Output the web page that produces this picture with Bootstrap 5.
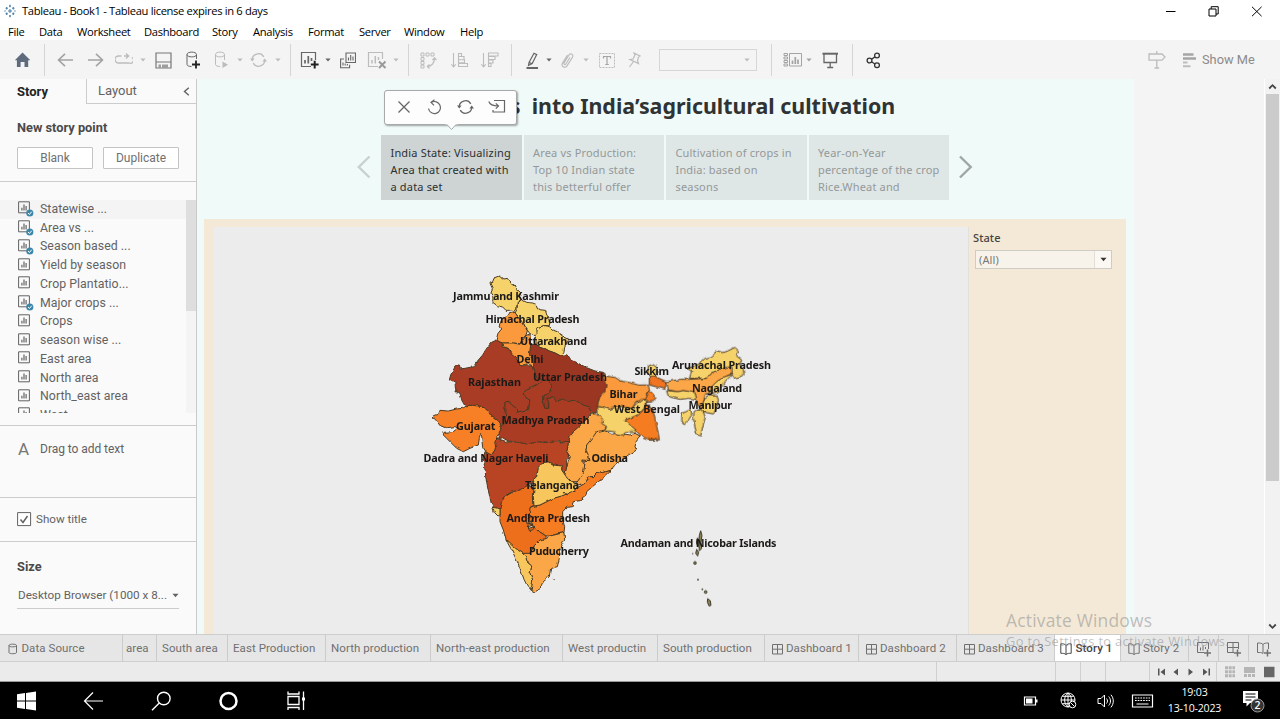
<!DOCTYPE html>
<html lang="en">
<head>
<meta charset="utf-8">
<meta name="viewport" content="width=device-width, initial-scale=1">
<title>Tableau - Book1</title>
<link href="https://cdn.jsdelivr.net/npm/bootstrap@5.3.0/dist/css/bootstrap.min.css" rel="stylesheet">
<style>
  body { font-family: Roboto, "Liberation Sans", sans-serif; font-size: 12.5px; color: #626262; line-height: 1.2; background: #fff; }
  svg { display: block; flex: none; fill: none; stroke: currentColor; }
  svg .solid { fill: currentColor; stroke: none; }
  .app-window { width: 1280px; height: 719px; }
  .os-font { font-family: "Open Sans", "Noto Sans", sans-serif; color: #000; }
  .title-strip { height: 22px; font-size: 11.2px; letter-spacing: -.34px; }
  .app-mark { color: #4c82ad; }
  .win-controls { gap: 32px; padding-right: 17px; }
  .menu-strip { height: 18px; font-size: 11.2px; padding: 1px 0 0 8px; display: grid; letter-spacing: -.3px;
    grid-template-columns: 31px 38px 67px 68px 41px 55px 51px 45px 56px 40px; }
  .tool-strip { height: 39px; background: #f4f4f4; display: grid; align-items: center; color: #666; padding: 1px 0 0 14px;
    grid-template-columns: 30px 13px 30px 28px 25px 15px 30px 29px 23px 13px 25px 15px 10px 25px 15px 27px 26px 15px 12px 31px 30px 30px 14px 21px 14px 23px 15px 30px 31px 112px 12px 23px 16px 30px 14px 282px 35px 90px; }
  .tool-strip .off { color: #bcbcbc; }
  .tool-strip .mid { color: #a3a3a3; }
  .rule { width: 1px; height: 32px; background: #d4d4d4; }
  .combo { width: 98px; height: 22px; border: 1px solid #d6d6d6; padding-right: 6px; }
  .show-me { font-size: 12.8px; color: #8b8b8b; gap: 6px; }
  .show-me svg { color: #a5a5a5; }
  .work-row { height: 555px; }
  .side-pane { width: 197px; background: #fafafa; border-right: 1px solid #c9c9c9; }
  .pane-tabs { height: 25px; font-size: 13px; }
  .pane-tabs .current { width: 86px; padding-left: 17px; color: #222; font-weight: 700; }
  .pane-tabs .other { border-left: 1px solid #ccc; border-bottom: 1px solid #ccc; padding: 0 6px 0 11px; }
  .pane-head { font-weight: 700; font-size: 12.8px; color: #4a4a4a; }
  .new-point { height: 77px; padding: 16px 17px 0; }
  .pane-btn { height: 22px; width: 76px; border: 1px solid #c4c4c4; background: #fff; color: #707070; font-size: 12px; padding: 0 0 1px; border-radius: 1px; line-height: 1; }
  .sheets { height: 245px; border-top: 1px solid #ccc; border-bottom: 1px solid #ccc; padding-top: 18px; }
  .sheets-view { height: 213px; }
  .sheet-item { height: 18.74px; padding-left: 17.5px; gap: 6.5px; font-size: 12.3px; letter-spacing: .05px; white-space: nowrap; }
  .sheet-item:first-child { background: #f4f4f4; }
  .pane-thumb { width: 10px; height: 111px; background: #dedede; }
  .pane-track { width: 10px; background: #f4f4f4; }
  .text-drag { height: 72px; border-bottom: 1px solid #ccc; padding: 15px 18px 0; gap: 11px; font-size: 12px; }
  .text-drag b { font-size: 17px; font-weight: 400; line-height: 1; color: #777; }
  .text-drag span { padding-top: 1px; letter-spacing: -.05px; }
  .show-title { height: 44px; border-bottom: 1px solid #ccc; padding-left: 17px; gap: 4px; font-size: 11.6px; }
  .size-box { padding: 17px 17px 0; }
  .size-pick { margin-top: 10px; height: 25px; border-bottom: 1px solid #ccc; font-size: 11.7px; padding: 0 0 2px 1px; white-space: nowrap; }
  .story-canvas { width: 937px; background: #effaf9; }
  .grey-margin { width: 130px; background: #f4f4f4; }
  .v-scroll { width: 16px; background: #f2f2f2; border-left: 1px solid #fff; color: #444; }
  .v-thumb { height: 387px; width: 13px; background: #cbcbcb; }
  .story-title { font-family: "Noto Sans", sans-serif; font-weight: 700; font-size: 21.4px; color: #2f3333; height: 56px; white-space: pre; padding: 0 2px 3px 0; }
  .story-nav { height: 65px; padding-right: 1px; }
  .nav-prev { color: #c9d0d0; }
  .nav-next { color: #a0a6a6; }
  .captions { gap: 2px; width: 568px; }
  .caption-box { font-family: "Noto Sans", sans-serif; font-size: 11px; line-height: 17px; letter-spacing: .17px; background: #dfe6e6; color: #939999; padding: 9px 0 0 9.5px; width: 140.5px; white-space: nowrap; }
  .caption-box.current { background: #ced4d4; color: #2c3030; }
  .tip { left: 187px; top: 11px; width: 133px; height: 35px; background: #fdfdfd; border: 1px solid #a9a9a9; border-radius: 3px; box-shadow: 1px 1px 2px rgba(0,0,0,.35); padding: 0 0 2px 3px; color: #666; display: grid; grid-template-columns: repeat(4, 31px); place-items: center; }
  .tip-arrow { left: 60px; top: 32px; }
  .dash { background: #f4e9d7; margin: 19px 8px 0 7px; padding: 8px 0 0 10px; height: 415px; }
  .map-zone { width: 755px; background: #ececec; border-right: 1px solid #e2e0dc; }
  .filter-zone { padding: 4px 0 0 4px; font-family: "Noto Sans", sans-serif; font-size: 11px; color: #444; letter-spacing: .1px; }
  .filter-pick { width: 137px; height: 19px; margin: 6px 0 0 2px; background: #f8f3ea; border: 1px solid #cfccc6; padding: 0 0 0 3px; color: #777; }
  .filter-pick .drop { width: 17px; height: 17px; background: #fbf8f3; border-left: 1px solid #e2dfd8; color: #333; }
  .map-text text { font: 700 10.8px "Noto Sans", "Open Sans", sans-serif; fill: #1c1a18; stroke: none; }
  .sheet-tabs { height: 28px; background: #e6e6e6; border-top: 1px solid #cdcdcd; border-bottom: 1px solid #cfcfcf; display: grid; font-size: 11.5px; letter-spacing: .07px; color: #707070;
    grid-template-columns: 123px 34px 71px 98px 105px 132px 95px 107px 94px 98px 98px 66px 68px 30px 30px 31px; }
  .sheet-tabs > div { border-right: 1px solid #cbcbcb; display: flex; align-items: center; white-space: nowrap; padding: 2px 0 0 5px; gap: 3.5px; }
  .sheet-tabs > .ico { padding-left: 6.5px; }
  .sheet-tabs > .current { background: #fff; color: #444; font-weight: 500; }
  .status-strip { height: 20px; background: #ebebeb; border-bottom: 1px solid #999; display: grid; color: #555;
    grid-template-columns: 937px 119px 25px 25px 44px 67px 63px; }
  .status-strip > div { border-right: 1px solid #cfcfcf; }
  .status-strip > div:last-child { border: 0; }
  .task-strip { height: 37px; background: #000; color: #fff; display: grid; align-items: center; padding-left: 16px;
    grid-template-columns: 67px 68px 67px 67px 738px 37px 37px 34px 34.5px 75px 26px; }
  .task-strip svg { color: #fff; }
  .clock { width: 58px; font-size: 10.6px; line-height: 16.5px; color: #fff; letter-spacing: -.2px; padding-bottom: 1px; }
  .watermark { left: 1006px; top: 609px; color: rgba(135,135,135,.52); font-family: "Open Sans", sans-serif; pointer-events: none; white-space: nowrap; }
  .watermark .big { font-size: 17.4px; line-height: 22px; letter-spacing: .22px; }
  .watermark .sub { font-size: 12.8px; line-height: 20px; letter-spacing: .38px; }
</style>
</head>
<body class="overflow-hidden">

<svg width="0" height="0" class="position-absolute">
  <defs>
    <symbol id="caret" viewBox="0 0 6 4"><path class="solid" d="M.4.4h5.2L3 3.4z" fill="currentColor"/></symbol>
    <symbol id="sheet" viewBox="0 0 16 16"><path d="M.6.8h10.8v11H.6z"/><path d="M3.9 9.500V6.800M6 9.500V3.500M8.100 9.500V5" stroke-width="1.200"/></symbol>
    <symbol id="used" viewBox="0 0 16 16"><path d="M.6.8h10.8v11H.6z"/><path d="M3.9 9.500V6.800M6 9.500V3.500M8.100 9.500V5" stroke-width="1.200"/><circle cx="11.800" cy="12" r="3.600" fill="#3d87a8" stroke="none"/><path d="M10 12l1.400 1.500 2.300-2.800" stroke="#fff"/></symbol>
    <symbol id="dashb" viewBox="0 0 11 11"><path d="M.5.5h10v9.500H.5zM5.500.5V10M.5 5.200h10"/></symbol>
    <symbol id="book" viewBox="0 0 12 12"><path d="M6 2.500C4.500 .8 3 .7.8.8v9.500c2.200 0 3.700 0 5.200 1.200 1.500-1.200 3-1.200 5.200-1.200V.8C9 .7 7.500 .8 6 2.500v9"/></symbol>
  </defs>
</svg>

<div class="app-window d-flex flex-column position-relative">

  <header class="title-strip os-font d-flex align-items-center justify-content-between">
    <div class="d-flex align-items-center ps-1" style="gap:6px">
      <svg class="app-mark" width="12" height="14" viewBox="0 0 12 14" stroke-width="1.100"><path d="M6 5v4M4 7h4M6 .8v2.400M5 2h2M6 11v2.200M5 12h2M2.700 3v2.400M1.500 4.200h2.400M9.300 3v2.400M8.100 4.200h2.400M2.700 8.600V11M1.500 9.800h2.400M9.300 8.600V11M8.100 9.800h2.400M.3 7h1.500M10.200 7h1.500"/></svg>
      <span>Tableau - Book1 - Tableau license expires in 6 days</span>
    </div>
    <div class="win-controls d-flex align-items-center">
      <svg width="11" height="11"><path d="M1 5.500h9.500"/></svg>
      <svg width="11" height="11" viewBox="0 0 11 11"><path d="M1 3h7v7H1zM3.200 3V.7h7V8H8"/></svg>
      <svg width="12" height="11" viewBox="0 0 12 11"><path d="M1 .8l9.600 9.400M10.600.8L1 10.200"/></svg>
    </div>
  </header>

  <nav class="menu-strip os-font align-items-center">
    <span>File</span><span>Data</span><span>Worksheet</span><span>Dashboard</span><span>Story</span><span>Analysis</span><span>Format</span><span>Server</span><span>Window</span><span>Help</span>
  </nav>

  <div class="tool-strip">
    <svg width="17" height="16" viewBox="0 0 17 16" style="color:#5d6b7c"><path class="solid" d="M8.500 .6L16.300 8.300H14.200V15H10.500V10H6.600v5H2.900V8.300H.8z"/></svg>
    <div class="rule"></div>
    <svg class="mid" width="17" height="16" stroke-width="1.600"><path d="M1.500 8H16M8 1.800L1.500 8 8 14.200"/></svg>
    <svg class="mid" width="17" height="16" stroke-width="1.600"><path d="M15.500 8H1M9 1.800L15.500 8 9 14.200"/></svg>
    <svg class="off" width="18" height="16" stroke-width="1.300"><path d="M6.500 4H3.500a2.500 2.500 0 0 0 0 7h10.500a3 3 0 0 0 2.800-5.500M9 4h4.500M11 1.500L13.700 4 11 6.500"/></svg>
    <svg class="off" width="6" height="4"><use href="#caret"/></svg>
    <svg width="17" height="17" viewBox="0 0 17 17" style="color:#777"><path d="M1 1h15v15H1zM1 10h15" stroke-width="1.200"/><path class="solid" d="M3.500 12.500h2.500v3h-2.500zM7 12.500h6v3H7z" opacity=".7"/></svg>
    <svg width="16" height="18" viewBox="0 0 16 18"><path d="M11.500 8V3.500C11.500 .3 2 .3 2 3.500v10c0 1.200 2 2 4.500 2M2 3.500C2 6.700 11.500 6.700 11.500 3.500"/><path d="M11 9.500v8M7 13.500h8" stroke-width="1.800" stroke="#222"/></svg>
    <svg class="off" width="15" height="18" viewBox="0 0 15 18"><path d="M10.500 9V3.500C10.500 .3 1.500 .3 1.500 3.500v10c0 1.200 2 2 4.500 2M1.500 3.500C1.500 6.700 10.500 6.700 10.500 3.500"/><path class="solid" d="M8.500 10.500l5.500 3.200-5.500 3.200z"/></svg>
    <svg class="off" width="6" height="4"><use href="#caret"/></svg>
    <svg class="off" width="17" height="16" viewBox="0 0 17 16" stroke-width="1.300"><path d="M2.300 8.500A6.200 6.200 0 0 1 13.800 4.800M14.700 7.500A6.200 6.200 0 0 1 3.200 11.200"/><path class="solid" d="M0 6.500h4.600L2.300 9.600zM12.400 9.500H17l-2.300-3.100z"/></svg>
    <svg class="off" width="6" height="4"><use href="#caret"/></svg>
    <div class="rule"></div>
    <svg width="20" height="18" viewBox="0 0 20 18"><path d="M11 15.500H1.500V1.500h14V9" stroke-width="1.200"/><path d="M5 12.500V9M8.300 12.500V5M11.500 10V7" stroke-width="1.700"/><path d="M14.700 9.700v7.800M10.800 13.600h7.800" stroke-width="2" stroke="#222"/></svg>
    <svg width="6" height="4"><use href="#caret"/></svg>
    <svg width="16" height="17" viewBox="0 0 16 17" stroke-width="1.100"><path d="M6 1h9.500v9.500H6zM4 7H.6v8.700h9v-3"/><path d="M8.500 8.500v-3M10.700 8.500V3M13 8.500v-4M3 13.500v-3M5.200 13.500v-2M7.400 13.500v-1.500"/></svg>
    <svg class="off" width="20" height="18" viewBox="0 0 20 18"><path d="M11 15.500H1.500V1.500h14V8" stroke-width="1.200"/><path d="M5 12.500V9M8.300 12.500V5M11.500 9V6" stroke-width="1.500"/><path d="M12 10.500l6.500 6.500M18.500 10.500L12 17" stroke-width="2" stroke="#9a9a9a"/></svg>
    <svg class="off" width="6" height="4"><use href="#caret"/></svg>
    <div class="rule"></div>
    <svg class="off" width="17" height="17" viewBox="0 0 17 17"><path d="M1 1h3v3H1zM6 1h3v3H6zM11 1h3v3h-3zM1 5.500h3v2.800H1zM1 9.500h3v2.800H1zM1 13.200h3V16H1z"/><path d="M14.500 6c0 5-3 8.500-7 8.500M12.500 8l2-2.200 2 2.200M9.500 12.300L7.300 14.500l2.200 2" stroke-width="1.200"/></svg>
    <svg class="off" width="18" height="17" viewBox="0 0 18 17" stroke-width="1.100"><path d="M2.500 1v14M.3 12.300l2.200 2.700 2.200-2.700M7.500 1.500h3v3h-3zM7.500 4.500H13v3.300H7.500zM7.500 7.800h6v3h-6zM7.500 11.500h9v3h-9z"/></svg>
    <svg class="off" width="18" height="17" viewBox="0 0 18 17" stroke-width="1.100"><path d="M2.500 1v14M.3 12.300l2.200 2.700 2.200-2.700M7.500 1h9.500v3H7.500zM7.500 4.500H14v3H7.500zM7.500 8h4.500v3H7.500zM7.500 11.500h2.500v3H7.500z"/></svg>
    <div class="rule"></div>
    <svg width="15" height="17" viewBox="0 0 15 17" stroke-width="1.200"><path d="M4 10.500L9 1.300l2.700 1.300-4.500 9L3.500 13.500zM4 10.500l3.200 1.100"/><path d="M1.500 16h11.500" stroke-width="2"/></svg>
    <svg width="6" height="4"><use href="#caret"/></svg>
    <svg class="off" width="15" height="17" viewBox="0 0 15 17" stroke-width="1.200"><path d="M10 5.500L5.800 12c-.8 1.200-2.600 0-1.800-1.200L9 3c1.500-2.300 5-.2 3.500 2.200L7 13.800c-2.200 3-6.500.5-4.500-2.800L7.500 3"/></svg>
    <svg class="off" width="6" height="4"><use href="#caret"/></svg>
    <svg class="off" width="18" height="17" viewBox="0 0 18 17"><path d="M1.500 1.500h15v14h-15z" stroke-dasharray="2 1"/><path d="M5.500 6.500V4.500h7v2M9 4.500v8M7.300 12.500h3.500" stroke-width="1.200" stroke="#a3a3a3"/></svg>
    <svg class="off" width="13" height="16" viewBox="0 0 13 16" stroke-width="1.200"><path d="M6 1l6 3-1.500 1L9.500 9l1 2.500L2 7.500l3-.5 2-4zM5.500 9.500L1.500 15"/></svg>
    <div class="combo d-flex align-items-center justify-content-end off"><svg width="6" height="4"><use href="#caret"/></svg></div>
    <div class="rule"></div>
    <svg class="mid" width="20" height="16" viewBox="0 0 20 16"><path d="M1 1.500h3.500v2H1zM1 5h3.500v2H1zM1 8.500h3.500v2H1zM1 12h3.500v2H1zM6.500 1.500h12v12.500h-12z"/><path d="M9.500 12V8.500M12.300 12V5M15 12V7.500" stroke-width="1.700"/></svg>
    <svg class="mid" width="6" height="4"><use href="#caret"/></svg>
    <svg width="17" height="17" viewBox="0 0 17 17" stroke-width="1.300"><path d="M.5 1.700h15.500" stroke-width="2"/><path d="M2 2v8.500h12.500V2M8.200 10.500v4.500M5.200 15.500h6"/></svg>
    <div class="rule"></div>
    <svg width="15" height="17" viewBox="0 0 15 17" stroke-width="1.300" style="color:#333"><circle cx="3.500" cy="8.500" r="2.400"/><circle cx="11" cy="3.500" r="2.400"/><circle cx="11" cy="13.300" r="2.400"/><path d="M5.600 7.200l3.300-2.300M5.600 9.800l3.300 2.200"/></svg>
    <svg class="off" width="18" height="18" viewBox="0 0 18 18" stroke-width="1.300"><path d="M1 3h13l3 3-3 3.200H1zM8.800 0v3M8.800 9.200v7.500M6.500 17h4.600"/></svg>
    <div class="show-me d-flex align-items-center"><svg width="13" height="15" viewBox="0 0 13 15" stroke-width="2.600"><path d="M0 1.500h10.500M0 5.500h13"/><path d="M0 9.500h4.500M0 13.300h7.500" stroke="#bdbdbd" stroke-width="2"/></svg><span>Show&nbsp;Me</span></div>
  </div>

  <main class="work-row d-flex">
    <aside class="side-pane flex-shrink-0">
      <div class="pane-tabs d-flex">
        <div class="current d-flex align-items-center">Story</div>
        <div class="other flex-grow-1 d-flex align-items-center justify-content-between"><span>Layout</span><svg width="7" height="9" stroke-width="1.400"><path d="M5.800.8L1.500 4.500l4.300 3.700"/></svg></div>
      </div>
      <section class="new-point">
        <div class="pane-head">New story point</div>
        <div class="d-flex justify-content-between mt-1 pt-2"><button class="btn pane-btn">Blank</button><button class="btn pane-btn">Duplicate</button></div>
      </section>
      <section class="sheets">
        <div class="sheets-view d-flex overflow-hidden">
          <div class="flex-grow-1">
            <div class="sheet-item d-flex align-items-center"><svg width="16" height="16"><use href="#used"/></svg>Statewise ...</div>
            <div class="sheet-item d-flex align-items-center"><svg width="16" height="16"><use href="#used"/></svg>Area vs ...</div>
            <div class="sheet-item d-flex align-items-center"><svg width="16" height="16"><use href="#used"/></svg>Season based ...</div>
            <div class="sheet-item d-flex align-items-center"><svg width="16" height="16"><use href="#sheet"/></svg>Yield by season</div>
            <div class="sheet-item d-flex align-items-center"><svg width="16" height="16"><use href="#sheet"/></svg>Crop Plantatio...</div>
            <div class="sheet-item d-flex align-items-center"><svg width="16" height="16"><use href="#used"/></svg>Major crops ...</div>
            <div class="sheet-item d-flex align-items-center"><svg width="16" height="16"><use href="#sheet"/></svg>Crops</div>
            <div class="sheet-item d-flex align-items-center"><svg width="16" height="16"><use href="#sheet"/></svg>season wise ...</div>
            <div class="sheet-item d-flex align-items-center"><svg width="16" height="16"><use href="#sheet"/></svg>East area</div>
            <div class="sheet-item d-flex align-items-center"><svg width="16" height="16"><use href="#sheet"/></svg>North area</div>
            <div class="sheet-item d-flex align-items-center"><svg width="16" height="16"><use href="#sheet"/></svg>North_east area</div>
            <div class="sheet-item d-flex align-items-center"><svg width="16" height="16"><use href="#sheet"/></svg>West ...</div>
          </div>
          <div class="pane-track"><div class="pane-thumb"></div></div>
        </div>
      </section>
      <section class="text-drag d-flex"><b>A</b><span>Drag to add text</span></section>
      <section class="show-title d-flex align-items-center"><svg width="15" height="15"><path d="M.6.6h13v13H.6z" fill="#fff"/><path d="M3.500 7.500l2.500 3 4.500-6.500" stroke-width="1.500"/></svg><span>Show title</span></section>
      <section class="size-box">
        <div class="pane-head">Size</div>
        <div class="size-pick d-flex align-items-center justify-content-between"><span>Desktop Browser (1000 x 8...</span><svg width="7" height="5"><use href="#caret"/></svg></div>
      </section>
    </aside>

    <div class="story-canvas position-relative flex-shrink-0">
      <div class="story-title d-flex align-items-center justify-content-center">Insights  into India’sagricultural cultivation</div>
      <div class="story-nav d-flex align-items-center justify-content-center">
        <svg class="nav-prev" width="24" height="26" stroke-width="2.400"><path d="M12.500 1.500L1.800 12l10.700 10.500"/></svg>
        <div class="captions d-flex align-self-stretch">
          <div class="caption-box current">India State: Visualizing<br>Area that created with<br>a data set</div>
          <div class="caption-box">Area vs Production:<br>Top 10 Indian state<br>this betterful offer</div>
          <div class="caption-box">Cultivation of crops in<br>India: based on<br>seasons</div>
          <div class="caption-box">Year-on-Year<br>percentage of the crop<br>Rice.Wheat and</div>
        </div>
        <svg class="nav-next" width="24" height="26" stroke-width="2.400"><path d="M11 1.500L21.700 12 11 22.500"/></svg>
      </div>
      <div class="tip position-absolute">
        <svg width="14" height="14" stroke-width="1.300"><path d="M1.500 1.500l11 11M12.500 1.500l-11 11"/></svg>
        <svg width="15" height="16" stroke-width="1.200"><path d="M4.500 3.300a6 6 0 1 1-3 6.200M7.500.8L4 3.300l3 3"/></svg>
        <svg width="17" height="16" stroke-width="1.300"><path d="M2.300 8.500A6.200 6.200 0 0 1 13.800 4.800M14.700 7.500A6.200 6.200 0 0 1 3.200 11.200"/><path class="solid" d="M0 6.500h4.600L2.300 9.600zM12.400 9.500H17l-2.300-3.100z"/></svg>
        <svg width="18" height="15" stroke-width="1.200"><path d="M6 1.500h10.500v11.500H5v-2M.8 2.500c1 3 3.500 4.500 9.500 4.500M7.800 4.300L10.500 7l-2.700 2.700"/></svg>
        <svg class="tip-arrow position-absolute" width="14" height="8"><path d="M.5 0L6.500 6.500 12.500 0" fill="#fdfdfd" stroke="#a9a9a9"/><path d="M0 .3h13" stroke="#fdfdfd" stroke-width="2"/></svg>
      </div>

      <div class="dash d-flex">
        <div class="map-zone flex-shrink-0">
          <svg width="754" height="407" viewBox="214 227 754 407">
            <defs><filter id="coast" x="-5%" y="-5%" width="110%" height="110%" color-interpolation-filters="sRGB"><feTurbulence type="fractalNoise" baseFrequency=".2" numOctaves="1" seed="4"/><feDisplacementMap in="SourceGraphic" scale="4" xChannelSelector="R" yChannelSelector="G"/></filter></defs>
            <g filter="url(#coast)"><g transform="translate(420 265) scale(.33333)" stroke="#4a3a22" stroke-width="3" stroke-linejoin="round">
              <!-- north and west -->
              <g fill="#f5d26a">
                <path d="M210,55 218,50 222,40 240,33 252,42 262,40 270,52 285,62 290,72 303,84 298,95 305,104 292,112 290,128 280,142 268,136 258,136 248,126 232,122 218,112 220,95 213,85 217,70z"/>
                <path d="M305,104 320,112 338,114 352,120 358,134 376,136 382,155 390,170 388,182 372,182 352,188 350,210 340,212 330,206 318,190 308,170 296,155 285,146 292,128 292,112z"/>
                <path d="M352,188 372,182 388,185 400,195 415,200 425,212 446,222 434,244 432,262 424,274 405,264 388,258 370,248 345,238 345,225 350,210z"/>
              </g>
              <path fill="#fb9a3c" d="M268,146 285,142 296,160 308,172 316,186 322,198 318,210 302,228 300,236 280,234 250,234 228,226 234,205 245,192 238,180 246,162 260,152z"/>
              <path fill="#a83c24" d="M228,226 215,232 200,250 188,270 175,285 160,305 135,310 120,312 118,300 108,300 100,315 92,330 88,345 105,355 108,380 120,385 128,415 140,422 158,421 190,425 205,440 215,455 235,470 245,485 255,475 250,460 262,450 255,440 255,415 268,410 275,420 290,430 290,445 308,440 325,438 330,405 315,398 310,385 330,370 355,355 370,346 350,338 345,320 340,304 325,302 300,302 295,285 280,272 265,250 250,245 250,234z"/>
              <path fill="#a93c22" d="M370,346 388,345 396,365 388,380 372,392 370,410 375,430 386,430 386,412 380,400 400,398 410,408 430,402 445,412 470,406 490,420 505,425 515,445 500,462 488,475 480,485 465,495 450,515 445,535 425,530 415,527 400,535 370,530 350,533 335,530 325,540 310,538 300,530 280,530 265,528 250,520 235,520 238,505 245,485 255,475 250,460 262,450 255,440 255,415 268,410 275,420 290,430 290,445 308,440 325,438 330,405 315,398 310,385 330,370 355,355z"/>
              <path fill="#9b3623" d="M330,240 345,238 370,248 388,258 405,264 424,274 440,272 455,285 475,295 500,308 525,318 550,322 558,340 560,365 555,385 540,395 535,415 532,440 518,446 505,425 490,420 470,406 445,412 430,402 410,408 400,398 380,400 386,412 386,430 375,430 370,410 372,392 388,380 396,365 388,345 370,346 350,338 345,320 340,304 340,285 328,270z"/>
              <path fill="#fb9a3c" d="M250,234 280,234 300,238 318,212 330,206 332,240 328,270 342,290 340,304 325,296 300,302 295,285 280,272 265,250 250,245z"/>
              <path fill="#f77f26" d="M40,452 52,448 60,436 85,438 110,432 128,430 140,422 158,421 190,425 205,440 215,455 235,470 245,485 238,505 230,515 235,525 225,535 228,550 215,570 205,568 198,560 188,545 186,525 184,505 178,520 175,540 150,550 130,560 110,550 95,535 80,520 70,510 72,502 100,500 115,488 100,485 80,488 60,482 52,470 42,460z"/>
              <path fill="#fba647" d="M515,448 530,446 545,455 560,480 555,500 530,505 520,520 500,540 498,555 510,585 485,588 495,600 492,625 475,650 455,650 445,640 435,628 440,605 450,575 440,560 445,535 450,515 465,495 488,475 500,462z"/>
              <!-- peninsula -->
              <g transform="translate(0 495)">
                <path fill="#fba647" d="M500,45 520,20 530,5 555,0 575,12 600,10 630,15 645,10 660,18 650,30 645,50 650,60 625,75 600,95 580,110 575,120 550,128 535,125 520,140 505,140 495,160 475,165 470,158 490,130 495,100 485,90 510,92 505,75 498,60z"/>
                <path fill="#b84424" d="M230,25 260,35 300,38 320,42 345,35 380,38 415,35 445,38 440,65 450,80 440,90 440,110 435,130 425,120 425,108 400,105 385,96 368,98 355,115 350,135 345,150 325,165 300,180 280,185 255,200 245,215 240,235 225,235 215,225 208,195 200,160 195,120 190,85 195,65 215,75 225,60z"/>
                <path fill="#f57c20" d="M575,120 555,140 535,155 500,185 498,198 480,212 460,215 455,230 440,232 428,245 428,270 434,290 432,308 410,312 390,318 378,318 358,305 345,290 330,285 340,262 325,255 330,232 342,228 360,225 400,205 440,192 475,172 495,160 505,140 520,140 535,125 550,128z"/>
                <path fill="#ee6f1b" d="M240,235 245,215 255,200 280,185 300,180 325,165 342,175 340,200 342,225 330,232 328,255 340,262 328,280 325,295 345,290 358,305 378,318 378,328 360,330 345,345 330,370 315,372 290,360 270,345 258,330 250,300 240,275 240,255z"/>
                <path fill="#f7c75e" d="M368,98 385,96 400,105 425,108 425,120 435,135 445,148 452,155 470,160 475,172 455,185 440,192 425,198 400,205 380,215 360,225 342,228 340,200 342,175 338,150 350,140 355,115z"/>
                <path fill="#fba647" d="M432,308 434,330 420,355 418,385 412,410 392,415 388,440 370,455 362,475 345,486 332,480 338,450 330,430 335,408 320,395 318,380 305,370 330,370 345,345 360,330 378,326 390,318z"/>
                <path fill="#f7c75e" d="M258,330 280,350 305,368 318,380 320,395 335,408 330,430 338,450 334,480 322,468 312,448 302,420 292,395 275,360z"/>
                <path fill="#f5d26a" d="M218,232 240,236 240,255 234,258 224,248z"/>
                <path d="M318,278l18,4 6,14 -14,6 -4,-12 14,-4M398,445l6,4M320,250l10,6 -6,10M432,186l8,10"/>
              </g>
              <!-- east and north-east -->
              <g transform="translate(540 195)">
                <path fill="#fb9a3c" d="M12,128 20,138 45,142 60,152 90,158 115,165 145,165 148,180 140,195 145,205 125,210 110,215 95,235 70,235 55,228 30,238 10,232 -8,230 -5,215 0,200 15,185 18,165 10,145z"/>
                <path fill="#f57c20" d="M148,182 158,190 168,205 158,212 140,215 138,225 150,225 160,245 168,280 175,310 178,330 165,328 150,332 130,325 110,305 90,285 75,270 95,262 115,255 130,240 135,215 140,200z"/>
                <path fill="#f07422" d="M148,138 170,142 200,155 195,178 175,172 148,165z"/>
                <g fill="#f5d26a">
                  <path d="M-8,230 10,232 30,238 55,228 95,235 110,220 125,207 138,212 132,235 115,255 95,262 75,270 90,285 108,300 100,305 75,305 70,318 50,315 45,305 15,302 20,290 5,280 8,268 -5,255z"/>
                  <path d="M145,108 158,103 170,112 170,138 150,140 143,125z"/>
                  <path d="M268,145 275,125 262,115 285,108 300,100 315,85 335,80 350,62 370,68 385,62 405,52 415,62 410,78 425,90 420,105 430,118 432,135 428,138 400,145 395,130 380,118 360,118 335,130 320,145z"/>
                </g>
                <path fill="#fba647" d="M200,155 240,148 268,148 320,145 335,130 360,118 390,110 398,130 375,140 350,155 335,170 330,190 315,195 310,220 300,240 290,215 285,190 250,182 235,185 205,180z"/>
                <g fill="#f5d26a">
                  <path d="M200,182 235,185 250,182 285,188 290,208 265,205 240,208 205,200z"/>
                  <path d="M398,132 380,150 372,165 355,185 335,190 335,170 350,155 375,140z"/>
                  <path d="M315,205 330,195 350,195 355,210 350,235 340,252 320,248 305,245 308,225z"/>
                  <path d="M290,240 308,242 316,262 308,290 302,318 290,315 285,290 280,265 282,245z"/>
                  <path d="M272,238 275,255 262,275 252,285 245,270 247,250 262,243z"/>
                </g>
                <path d="M145,322l6,8 4,-10 6,12 6,-8 6,6"/>
              </g>
            </g></g>
            <!-- islands -->
            <g transform="translate(610 510) scale(.33333)" stroke="#3d3a2c" stroke-width="3" fill="#8a8055">
              <path d="M272,62l4,14 -3,22 2,18 -7,6 -2,-24 2,-22zM262,84l-3,14 5,12 6,-18zM260,118l6,8 -3,12 -6,-8z"/>
              <circle cx="255" cy="159" r="4"/><circle cx="264" cy="209" r="1.500"/><circle cx="277" cy="238" r="1.500"/><circle cx="287" cy="246" r="4"/><path d="M293,266l8,6 2,14 -6,2 -5,-12zM246,131h4"/>
            </g>
            <g class="map-text">
              <text x="453" y="299.500" textLength="106">Jammu and Kashmir</text>
              <text x="485.500" y="323" textLength="94">Himachal Pradesh</text>
              <text x="520" y="344.500" textLength="67">Uttarakhand</text>
              <text x="516.500" y="362.500" textLength="27">Delhi</text>
              <text x="533" y="380.500" textLength="74">Uttar Pradesh</text>
              <text x="468" y="386" textLength="53">Rajasthan</text>
              <text x="501.500" y="423.500" textLength="88">Madhya Pradesh</text>
              <text x="456" y="430" textLength="39.500">Gujarat</text>
              <text x="609.500" y="397.500" textLength="28">Bihar</text>
              <text x="614" y="413" textLength="66">West Bengal</text>
              <text x="634.500" y="374.500" textLength="34.500">Sikkim</text>
              <text x="672" y="369" textLength="99">Arunachal Pradesh</text>
              <text x="692" y="392" textLength="50">Nagaland</text>
              <text x="688.500" y="408.500" textLength="43.500">Manipur</text>
              <text x="423.500" y="461.500" textLength="125">Dadra and Nagar Haveli</text>
              <text x="591.500" y="461.500" textLength="36.500">Odisha</text>
              <text x="525" y="489" textLength="54">Telangana</text>
              <text x="506.500" y="521.500" textLength="83.500">Andhra Pradesh</text>
              <text x="529" y="554.500" textLength="60">Puducherry</text>
              <text x="620.500" y="547" textLength="156">Andaman and Nicobar Islands</text>
            </g>
          </svg>
        </div>
        <div class="filter-zone flex-grow-1">
          <div class="fw-medium">State</div>
          <div class="filter-pick d-flex align-items-center justify-content-between"><span>(All)</span><div class="drop d-flex align-items-center justify-content-center"><svg width="7" height="5"><use href="#caret"/></svg></div></div>
        </div>
      </div>
    </div>

    <div class="grey-margin"></div>
    <div class="v-scroll d-flex flex-column align-items-center">
      <svg width="9" height="15" stroke-width="1.800"><path d="M1.200 9.500l3.300-3.300 3.300 3.300"/></svg>
      <div class="v-thumb"></div>
      <svg class="mt-auto" width="9" height="15" stroke-width="1.800"><path d="M1.200 5.500l3.300 3.300 3.300-3.300"/></svg>
    </div>
  </main>

  <nav class="sheet-tabs">
    <div class="ps-2"><svg width="10" height="12"><path d="M1 2.500C1 .7 8.500.7 8.500 2.500v7c0 1.600-7.500 1.600-7.500 0zC1 4.300 8.500 4.300 8.500 2.500"/></svg>Data Source</div>
    <div style="padding-left:3px">area</div>
    <div>South area</div><div>East Production</div><div>North production</div><div>North-east production</div><div>West productin</div><div>South production</div>
    <div class="ico"><svg width="11" height="11"><use href="#dashb"/></svg>Dashboard 1</div>
    <div class="ico"><svg width="11" height="11"><use href="#dashb"/></svg>Dashboard 2</div>
    <div class="ico"><svg width="11" height="11"><use href="#dashb"/></svg>Dashboard 3</div>
    <div class="current"><svg width="12" height="12"><use href="#book"/></svg>Story 1</div>
    <div class="ico"><svg width="12" height="12"><use href="#book"/></svg>Story 2</div>
    <div class="ico"><svg width="16" height="16"><path d="M8 11.500H1.500v-10h11V8M4.500 9.500v-3M7 9.500V4.500M9.500 8V6"/><path d="M11.500 8.500v7M8 12h7" stroke-width="1.500"/></svg></div>
    <div class="ico"><svg width="16" height="16"><path d="M8 11.500H1.500v-10h11V8M7 1.500v10M1.500 6.500h11"/><path d="M11.500 8.500v7M8 12h7" stroke-width="1.500"/></svg></div>
    <div class="ico border-0"><svg width="16" height="16"><path d="M7 12.500C5.500 11.300 4 11.500 1.500 11.500V2C4 2 5.500 2 7 3.500 8.500 2 10 2 12.500 2v6M7 3.500v9"/><path d="M11.500 8.500v7M8 12h7" stroke-width="1.500"/></svg></div>
  </nav>

  <div class="status-strip">
    <div></div><div></div><div></div><div></div><div></div>
    <div class="d-flex align-items-center" style="padding-left:7px">
      <svg width="60" height="10"><path class="solid" d="M8 1.500v7L3.500 5zM1 1.500h1.500v7H1zM21 1.500v7L16.500 5zM31.500 1.500v7L36 5zM46 1.500v7L50.500 5zM51.500 1.500H53v7h-1.500z"/></svg>
    </div>
    <div class="d-flex align-items-center" style="padding-left:8px">
      <svg width="50" height="12" viewBox="0 0 50 12"><path d="M0 1.800h10M0 5.800h10M0 9.800h10" stroke="#b5b5b5" stroke-width="3" stroke-dasharray="3 .7"/><path d="M19 4h11" stroke="#b5b5b5" stroke-width="6"/><path d="M19 9.500h11" stroke="#b5b5b5" stroke-width="3" stroke-dasharray="3 1"/><path d="M39 6h10.500" stroke="#666" stroke-width="10.500"/></svg>
    </div>
  </div>

  <footer class="task-strip os-font">
    <svg width="20" height="20"><path class="solid" d="M1 3.200l8-1.100v7.400H1zM10 2l10-1.500v9H10zM1 10.500h8v7.400l-8-1.100zM10 10.500h10v9L10 18z"/></svg>
    <svg width="21" height="20" stroke-width="1.200"><path d="M1.500 10H20M10 1.500L1.500 10l8.500 8.500"/></svg>
    <svg width="21" height="20" stroke-width="1.400"><circle cx="12.800" cy="7.500" r="6.300"/><path d="M8.300 12L1 19.300"/></svg>
    <svg width="21" height="20" stroke-width="2.500"><circle cx="10.500" cy="10" r="8"/></svg>
    <svg width="22" height="22" stroke-width="1.300"><path d="M3 6.500h11v8H3zM3 1.500v2.500h11V1.500M3 20v-2.500h11V20M18.500 1.500v18.500"/><path class="solid" d="M17 7.500h3v3h-3z"/></svg>
    <svg width="16" height="10"><path d="M1.500 1h11v8h-11z" stroke-width="1.200"/><path class="solid" d="M3 2.500h6.500v5H3zM13 3.500h1.500v3H13z"/></svg>
    <svg width="18" height="17" stroke-width="1"><circle cx="8" cy="8" r="7"/><path d="M8 1v14M1 8h14M2.300 4.300h11.400M2.300 11.700H13M8 1C3.500 4 3.500 12 8 15M8 1c4.500 3 4.500 11 0 14"/><circle cx="12.500" cy="12.500" r="3.300" fill="#000"/><path d="M10.500 10.500l4 4"/></svg>
    <svg width="18" height="16"><path d="M1 5.500h3l3.500-3.500v12L4 10.500H1zM9.500 5.500c1.300 1.500 1.300 3.500 0 5M11.700 3.500c2.400 2.700 2.400 6.300 0 9M13.900 1.700c3.200 3.700 3.200 9 0 12.700"/></svg>
    <svg width="23" height="14"><path d="M1.500 1h20v12h-20z" stroke-width="1.200"/><path d="M4 4h15M4 6.500h15" stroke-dasharray="1.700 1" stroke-width="1.200"/><path d="M5.500 10h12"/></svg>
    <div class="clock text-center">19:03<br>13-10-2023</div>
    <svg width="24" height="24"><path class="solid" d="M2 2h15v12H9l-3.500 3.500V14H2z"/><path d="M4.500 5h10M4.500 8h10M4.500 11h6" stroke="#000"/><circle cx="16.500" cy="16.500" r="6.500" fill="#333" stroke="#999"/><text x="13.600" y="20.300" fill="#fff" stroke="none" font-size="10.500" font-weight="600">2</text></svg>
  </footer>

  <div class="watermark position-absolute"><div class="big">Activate Windows</div><div class="sub">Go to Settings to activate Windows.</div></div>
</div>
<script src="https://cdn.jsdelivr.net/npm/bootstrap@5.3.0/dist/js/bootstrap.bundle.min.js"></script>
</body>
</html>
